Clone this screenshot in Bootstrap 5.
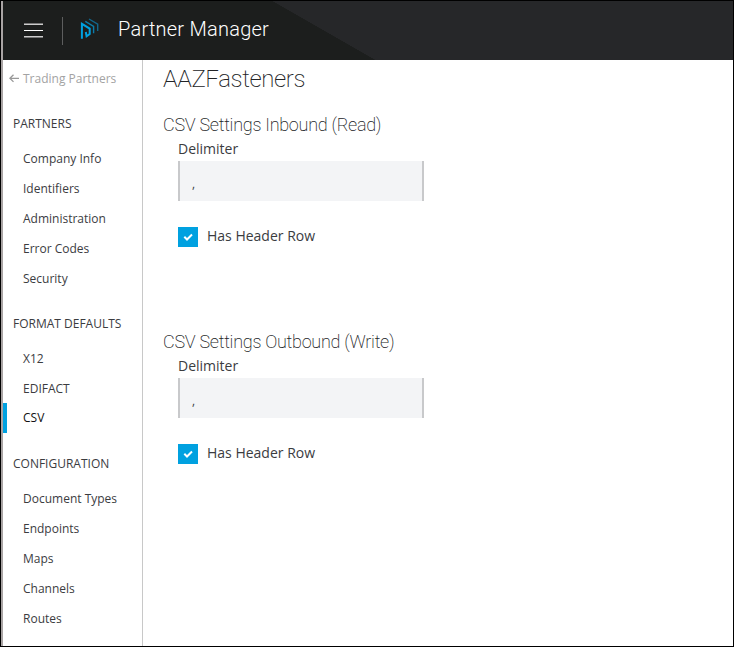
<!DOCTYPE html>
<html lang="en">
<head>
<meta charset="utf-8">
<meta name="viewport" content="width=device-width, initial-scale=1">
<title>Partner Manager</title>
<link href="https://cdn.jsdelivr.net/npm/bootstrap@5.3.0/dist/css/bootstrap.min.css" rel="stylesheet">
<style>
body{font-family:"Open Sans",sans-serif;font-size:14px;color:#3b3c3f;background:#fff}
.frame{height:647px;border:1px solid #000}
.shell{border-left:2px solid #a9a4a4}
.topbar{height:59px;padding:0 0 0 21px;background:linear-gradient(to top right,#1c1e1d 50%,#262729 50.4%) 269px 0/103px 59px no-repeat,linear-gradient(90deg,#1c1e1d 270px,#262729 270px)}
.menu-btn{width:19px;height:15px}
.rule{width:1px;height:28px;background:#5d5e5e;margin:1px 17px 0 19px}
.logo{margin-bottom:4px}
.brand-name{font-family:Roboto,sans-serif;font-weight:300;font-size:20px;line-height:30px;letter-spacing:.24px;color:#fff;margin:0 0 3px 18px}
.side{width:140px;border-right:1px solid #c8c8c8;font-size:12px;line-height:30px;color:#3b3c3f}
.back{height:34px;line-height:35px;padding:2px 0 0 6px;color:#a3a3a3}
.group-title{height:30px;padding-left:10px;margin-top:15px}
.side .nav{padding-top:5px}
.side .nav-link{padding:0 0 0 20px;height:30px;color:inherit;white-space:nowrap}
.side .nav-link.active{border-left:4px solid #00a1e0;padding-left:16px;margin-top:-1px;margin-bottom:1px;font-weight:500;color:#111}
.thin{font-family:Roboto,sans-serif;font-weight:200;margin:0;white-space:nowrap;color:#222326}
.content-area{padding:0 0 0 20px}
.page-title{font-size:24px;line-height:38px;letter-spacing:-.4px;margin-bottom:14px}
.section-title{font-size:18px;line-height:26px;letter-spacing:-.28px}
.csv-form{height:217px}
.fields{padding-left:15px}
.fields label{display:block;line-height:22px;margin-bottom:1px}
.fields .form-control{width:246px;height:40px;border:solid #c8c9cb;border-width:0 2px;border-radius:0;background:#f3f4f6;font-size:12px;padding:5px 12px 0;color:#3b3c3f}
.check-row{margin-top:26px;gap:9px;height:20px}
.check-row span{margin-bottom:3px}
.tick{width:20px;height:20px;background:#00a1e0}
</style>
</head>
<body>
<div class="frame"><div class="shell h-100 d-flex flex-column">
<header class="topbar d-flex align-items-center">
 <svg class="menu-btn" viewBox="0 0 19 15" shape-rendering="crispEdges"><path d="M0 .5h19M0 14.5h19" stroke="#777"/><path d="M0 1.5h19M0 13.5h19" stroke="#ccc"/><path d="M0 7.5h19" stroke="#fff"/></svg>
 <div class="rule"></div>
 <svg class="logo" width="20" height="22" viewBox="0 0 20 22" fill="none"><path d="M1.9 20.7V5.8L9.7 10.6V16L6.6 18.2 5.8 14" stroke="#00a1e0" stroke-width="2"/><path d="M5.3 3.3l8.3 5v7" stroke="#0b7dab" stroke-width="1.4"/><path d="M9 1l8.7 5.2V13" stroke="#12668b" stroke-width="1.4"/></svg>
 <div class="brand-name">Partner Manager</div>
</header>
<div class="d-flex flex-grow-1">
 <nav class="side flex-shrink-0">
  <div class="back d-flex align-items-center"><svg class="me-1" width="10" height="9" viewBox="0 0 10 9" fill="none" stroke="#999" stroke-width="1.3"><path d="M4.5 .7L.9 4.3l3.6 3.6M1 4.3h9"/></svg><span>Trading Partners</span></div>
  <div class="group-title">PARTNERS</div>
  <div class="nav flex-column"><a class="nav-link">Company Info</a><a class="nav-link">Identifiers</a><a class="nav-link">Administration</a><a class="nav-link">Error Codes</a><a class="nav-link">Security</a></div>
  <div class="group-title">FORMAT DEFAULTS</div>
  <div class="nav flex-column"><a class="nav-link">X12</a><a class="nav-link">EDIFACT</a><a class="nav-link active">CSV</a></div>
  <div class="group-title">CONFIGURATION</div>
  <div class="nav flex-column"><a class="nav-link">Document Types</a><a class="nav-link">Endpoints</a><a class="nav-link">Maps</a><a class="nav-link">Channels</a><a class="nav-link">Routes</a></div>
 </nav>
 <main class="content-area">
  <h1 class="thin page-title">AAZFasteners</h1>
  <section class="csv-form"><h2 class="thin section-title">CSV Settings Inbound (Read)</h2>
   <div class="fields"><label for="d1">Delimiter</label><input id="d1" class="form-control" value=",">
   <div class="d-flex align-items-center check-row"><svg class="tick" viewBox="0 0 20 20"><path d="M6.3 9.8l2.7 2.7 5-5" fill="none" stroke="#fff" stroke-width="2"/></svg><span>Has Header Row</span></div></div></section>
  <section class="csv-form"><h2 class="thin section-title">CSV Settings Outbound (Write)</h2>
   <div class="fields"><label for="d2">Delimiter</label><input id="d2" class="form-control" value=",">
   <div class="d-flex align-items-center check-row"><svg class="tick" viewBox="0 0 20 20"><path d="M6.3 9.8l2.7 2.7 5-5" fill="none" stroke="#fff" stroke-width="2"/></svg><span>Has Header Row</span></div></div></section>
 </main>
</div>
</div></div>
<script src="https://cdn.jsdelivr.net/npm/bootstrap@5.3.0/dist/js/bootstrap.bundle.min.js"></script>
</body>
</html>
